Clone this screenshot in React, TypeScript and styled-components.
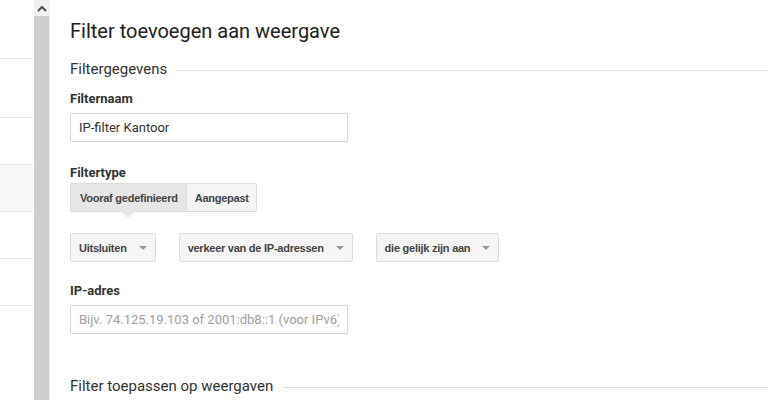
import * as React from "react"
import styled, { createGlobalStyle } from "styled-components"

const GlobalStyle = createGlobalStyle`
  html, body {
    margin: 0;
    padding: 0;
    background: #fff;
    overflow: hidden;
  }
  body {
    font-family: Roboto, "Liberation Sans", Arial, sans-serif;
    color: #222;
  }
`

// heights of the collapsed side menu rows, borders included
const navRows = [59, 59, 47, 47, 47, 47, 94]

const conditions = ["Uitsluiten", "verkeer van de IP-adressen", "die gelijk zijn aan"]

const App = () => {
  const [type, setType] = React.useState("preset")
  return (
    <Page>
      <GlobalStyle />
      <LeftNav>
        {navRows.map((h, i) => (
          <NavRow key={i} $height={h} $active={i === 3} $last={i === navRows.length - 1} />
        ))}
      </LeftNav>
      <ScrollTrack>
        <ScrollArrow>
          <svg width="10" height="7" viewBox="0 0 10 7">
            <path d="M1 6 L5 2 L9 6" fill="none" stroke="#505050" strokeWidth="2" />
          </svg>
        </ScrollArrow>
        <ScrollThumb />
      </ScrollTrack>
      <Main>
        <Title>Filter toevoegen aan weergave</Title>
        <SectionHeading>
          <span>Filtergegevens</span>
          <Rule />
        </SectionHeading>

        <Label>Filternaam</Label>
        <TextInput defaultValue="IP-filter Kantoor" />

        <Label $top={23}>Filtertype</Label>
        <Segmented>
          <SegButton $selected={type === "preset"} onClick={() => setType("preset")}>
            Vooraf gedefinieerd
          </SegButton>
          <SegButton $selected={type === "custom"} onClick={() => setType("custom")}>
            Aangepast
          </SegButton>
        </Segmented>

        <DropdownRow>
          {conditions.map((c) => (
            <Dropdown key={c}>
              <span>{c}</span>
              <Caret />
            </Dropdown>
          ))}
        </DropdownRow>

        <Label $top={21}>IP-adres</Label>
        <TextInput placeholder="Bijv. 74.125.19.103 of 2001:db8::1 (voor IPv6)" />

        <SectionHeading $top={42}>
          <span>Filter toepassen op weergaven</span>
          <Rule />
        </SectionHeading>
      </Main>
    </Page>
  )
}

export default App

const Page = styled.div`
  display: flex;
  width: 768px;
  height: 400px;
  overflow: hidden;
`

const LeftNav = styled.div`
  width: 33px;
  flex-shrink: 0;
  display: flex;
  flex-direction: column;
`

const NavRow = styled.div<{ $height: number; $active?: boolean; $last?: boolean }>`
  flex-shrink: 0;
  height: ${(p) => p.$height - 1}px;
  background: ${(p) => (p.$active ? "#f7f7f7" : "#fff")};
  border-bottom: 1px solid ${(p) => (p.$last ? "transparent" : "#e8e8e8")};
`

const ScrollTrack = styled.div`
  width: 15px;
  margin-left: 1px;
  flex-shrink: 0;
  display: flex;
  flex-direction: column;
  border-right: 1px solid #f0f0f0;
`

const ScrollArrow = styled.div`
  height: 16px;
  background: #f1f1f1;
  display: flex;
  align-items: center;
  justify-content: center;
`

const ScrollThumb = styled.div`
  flex: 1;
  background: #cdcdcd;
`

const Main = styled.div`
  flex: 1;
  padding-left: 20px;
  display: flex;
  flex-direction: column;
  align-items: flex-start;
`

const Title = styled.h1`
  margin: 19px 0 0;
  font-size: 20px;
  line-height: 24px;
  font-weight: 400;
  color: #212121;
`

const SectionHeading = styled.div<{ $top?: number }>`
  align-self: stretch;
  display: flex;
  align-items: center;
  gap: 10px;
  margin-top: ${(p) => p.$top ?? 16}px;
  font-size: 15px;
  line-height: 20px;
  color: #333;
`

const Rule = styled.div`
  flex: 1;
  height: 1px;
  background: #e0e0e0;
  margin-top: 2px;
`

const Label = styled.div<{ $top?: number }>`
  margin-top: ${(p) => p.$top ?? 12}px;
  font-size: 13px;
  line-height: 16px;
  font-weight: 700;
  color: #333;
`

const TextInput = styled.input`
  margin-top: 6px;
  box-sizing: border-box;
  width: 278px;
  height: 29px;
  padding: 0 8px;
  border: 1px solid #d9d9d9;
  border-radius: 1px;
  font-family: Roboto, "Liberation Sans", Arial, sans-serif;
  font-size: 13px;
  color: #333;
  outline: none;
  &::placeholder {
    color: #a0a0a0;
  }
`

const Segmented = styled.div`
  margin-top: 2px;
  display: flex;
`

const SegButton = styled.button<{ $selected?: boolean }>`
  position: relative;
  height: 29px;
  padding: 0 8px 0 9px;
  border: 1px solid #dcdcdc;
  margin-left: -1px;
  &:first-child {
    margin-left: 0;
    border-radius: 2px 0 0 2px;
  }
  &:last-child {
    padding: 0 7px 0 8px;
    border-radius: 0 2px 2px 0;
  }
  background: ${(p) => (p.$selected ? "#e6e6e6" : "#f5f5f5")};
  font-family: "Liberation Sans", Arial, sans-serif;
  font-size: 11px;
  letter-spacing: -0.25px;
  font-weight: 700;
  color: #444;
  cursor: pointer;
  ${(p) =>
    p.$selected &&
    `
    &::after {
      content: "";
      position: absolute;
      left: 50%;
      bottom: -7px;
      margin-left: -7px;
      border-left: 7px solid transparent;
      border-right: 7px solid transparent;
      border-top: 7px solid #e6e6e6;
    }
  `}
`

const DropdownRow = styled.div`
  margin-top: 21px;
  display: flex;
  gap: 23px;
`

const Dropdown = styled.button`
  height: 29px;
  display: flex;
  align-items: center;
  gap: 12px;
  padding: 0 8px 0 8px;
  border: 1px solid #dcdcdc;
  border-radius: 2px;
  background: #f5f5f5;
  font-family: "Liberation Sans", Arial, sans-serif;
  font-size: 11px;
  letter-spacing: -0.25px;
  font-weight: 700;
  color: #444;
  cursor: pointer;
`

const Caret = styled.span`
  width: 0;
  height: 0;
  border-left: 4px solid transparent;
  border-right: 4px solid transparent;
  border-top: 4px solid #999;
  margin-top: 1px;
`
